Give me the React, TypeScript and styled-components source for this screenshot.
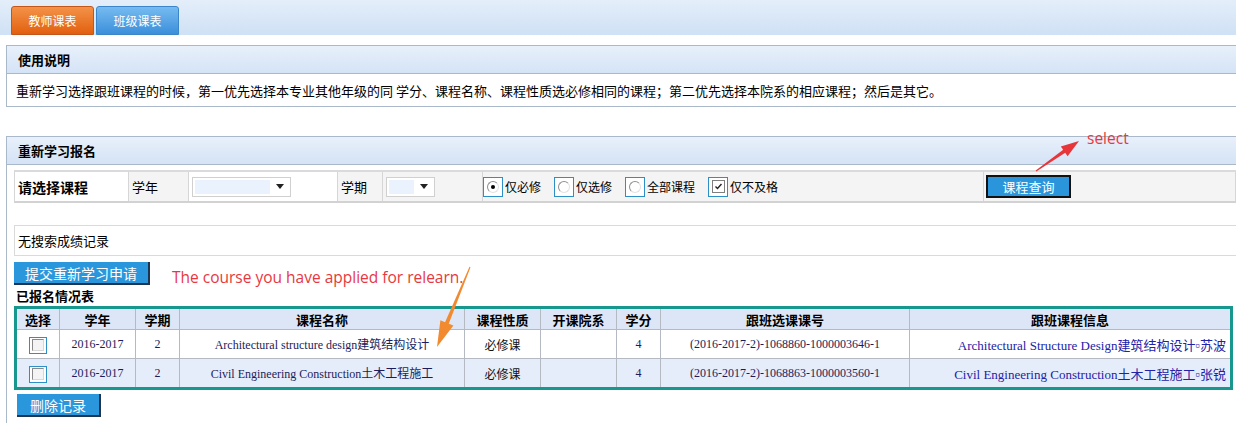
import styled, { createGlobalStyle, css } from "styled-components";

const GlobalStyle = createGlobalStyle`
	body {
		margin: 0;
		background: #ffffff;
		font-family: "Noto Sans CJK SC", "Noto Sans", sans-serif;
		font-size: 12px;
		color: #000;
		overflow: hidden;
	}
`;

const Page = styled.div`
	position: relative;
	width: 1236px;
	height: 423px;
	overflow: hidden;
`;

const TopBar = styled.div`
	height: 35px;
	display: flex;
	align-items: flex-end;
	gap: 2px;
	padding-left: 11px;
	background: linear-gradient(#e4eefa, #cfe1f5);
	box-sizing: border-box;
`;

const Tab = styled.div<{ $active?: boolean }>`
	width: 83px;
	height: 29px;
	box-sizing: border-box;
	display: flex;
	align-items: center;
	justify-content: center;
	color: #fff;
	font-size: 12px;
	border-radius: 3px 3px 0 0;
	${(p) =>
		p.$active
			? css`
					background: linear-gradient(#f39248, #e2600f);
					border: 1px solid #c4561a;
			  `
			: css`
					background: linear-gradient(#77bbf0, #3b8fda);
					border: 1px solid #3a86c8;
			  `}
`;

const Content = styled.div`
	padding: 10px 0 0 6px;
`;

const Panel = styled.div<{ $gap?: number }>`
	border: 1px solid #a9b9ca;
	border-right: none;
	margin-top: ${(p) => p.$gap || 0}px;
`;

const PanelHeader = styled.div`
	height: 27px;
	display: flex;
	align-items: center;
	padding-left: 11px;
	font-size: 13px;
	font-weight: bold;
	background: linear-gradient(#e8f0fb, #d4e3f6);
	border-bottom: 1px solid #a9b9ca;
`;

const Notice = styled.div`
	height: 32px;
	display: flex;
	align-items: center;
	padding-left: 9px;
	font-size: 13px;
`;

const PanelBody = styled.div`
	padding: 5px 0 0 7px;
	height: 260px;
`;

const FilterRow = styled.div`
	display: grid;
	grid-template-columns: 114px 60px 149px 45px 100px 501px 1fr;
	height: 33px;
	border-top: 2px solid #dadada;
	border-bottom: 2px solid #d2d2d2;
	border-left: 1px solid #d6d6d6;
	box-sizing: border-box;
`;

const FilterCell = styled.div<{ $gray?: boolean; $bold?: boolean; $flush?: boolean }>`
	display: flex;
	align-items: center;
	padding-left: ${(p) => (p.$flush ? 0 : 3)}px;
	border-right: 1px solid #d6d6d6;
	background: ${(p) => (p.$gray ? "#f4f4f4" : "#ffffff")};
	font-size: ${(p) => (p.$bold ? "14px" : "13px")};
	font-weight: ${(p) => (p.$bold ? "bold" : "normal")};
	box-sizing: border-box;
`;

const SelectBox = styled.div<{ $w: number }>`
	width: ${(p) => p.$w}px;
	height: 20px;
	border: 1px solid #d0d0d0;
	background: #fff;
	display: flex;
	align-items: center;
	padding: 0 2px;
	box-sizing: border-box;
	gap: 4px;
	span {
		flex: 1;
		height: 14px;
		background: #e9f2fd;
	}
	svg {
		width: 8px;
		height: 5px;
		margin: 0 4px 0 2px;
	}
`;

const Options = styled.div`
	display: flex;
	align-items: center;
	gap: 13px;
`;

const Option = styled.label`
	display: flex;
	align-items: center;
	gap: 2px;
	font-size: 12px;
`;

const MarkBox = styled.span`
	width: 20px;
	height: 20px;
	box-sizing: border-box;
	border: 1px solid #2d8fc6;
	display: flex;
	align-items: center;
	justify-content: center;
	background: #fff;
`;

const Radio = styled.span<{ $on?: boolean }>`
	width: 12px;
	height: 12px;
	border-radius: 50%;
	border: 1px solid #8f8f8f;
	border-right-color: #e2e2e2;
	border-bottom-color: #e2e2e2;
	box-sizing: border-box;
	display: flex;
	align-items: center;
	justify-content: center;
	&::after {
		content: "";
		width: 4px;
		height: 4px;
		border-radius: 50%;
		background: ${(p) => (p.$on ? "#000" : "transparent")};
	}
`;

const Check = styled.span`
	width: 13px;
	height: 13px;
	border: 1px solid #7f7f7f;
	box-sizing: border-box;
	display: flex;
	align-items: center;
	justify-content: center;
	background: #fff;
	svg {
		width: 9px;
		height: 9px;
	}
`;

const QueryButton = styled.button`
	width: 85px;
	height: 23px;
	margin-left: -1px;
	background: #2b95dc;
	color: #fff;
	border: 2px solid #111;
	font-family: inherit;
	font-size: 13px;
	padding: 0;
`;

const ResultRow = styled.div`
	margin-top: 22px;
	height: 29px;
	border: 1px solid #dadada;
	border-right: none;
	display: flex;
	align-items: center;
	padding-left: 3px;
	font-size: 13px;
`;

const BlueButton = styled.button<{ $w: number; $indent?: number }>`
	display: block;
	flex: none;
	width: ${(p) => p.$w}px;
	height: 23px;
	margin-left: ${(p) => p.$indent || 0}px;
	background: #2a97dd;
	color: #fff;
	border: none;
	border-right: 2px solid #1d3550;
	border-bottom: 2px solid #1d3550;
	font-family: inherit;
	font-size: 14px;
	padding: 0;
`;

const SubmitLine = styled.div`
	margin-top: 6px;
	height: 23px;
	display: flex;
	align-items: flex-start;
	gap: 22px;
`;

const Note = styled.span`
	font-family: "Open Sans", "Noto Sans", sans-serif;
	font-size: 15.5px;
	line-height: 20px;
	color: #e8383f;
	margin-top: 5px;
`;

const TableTitle = styled.div`
	margin-top: 1px;
	height: 20px;
	line-height: 20px;
	padding-left: 2px;
	font-size: 13px;
	font-weight: bold;
`;

const Table = styled.table`
	width: 1219px;
	border-collapse: collapse;
	border: 3px solid #17978e;
	table-layout: fixed;
`;

const Th = styled.th`
	height: 20px;
	padding: 0;
	background: #dce6f6;
	border: 1px solid #b4b9c2;
	font-size: 13px;
	font-weight: bold;
	text-align: center;
`;

const Tr = styled.tr<{ $alt?: boolean }>`
	background: ${(p) => (p.$alt ? "#e6edfa" : "#ffffff")};
`;

const Td = styled.td<{ $serif?: boolean; $right?: boolean; $link?: boolean }>`
	height: 28px;
	padding: 0 4px;
	border: 1px solid #b4b9c2;
	text-align: ${(p) => (p.$right ? "right" : "center")};
	font-family: ${(p) =>
		p.$serif
			? `"Liberation Serif", "Noto Sans CJK SC", serif`
			: `"Noto Sans CJK SC", sans-serif`};
	font-size: ${(p) => (p.$link ? "13px" : "12px")};
	color: ${(p) => (p.$link ? "#2222a8" : p.$serif ? "#1c1c5a" : "#111")};
	white-space: nowrap;
	overflow: hidden;
`;

const RowCheck = styled.span`
	display: inline-flex;
	width: 18px;
	height: 17px;
	box-sizing: border-box;
	border: 1px solid #2d8fc6;
	align-items: center;
	justify-content: center;
	background: #fff;
	vertical-align: middle;
	&::after {
		content: "";
		width: 12px;
		height: 12px;
		box-sizing: border-box;
		border: 1px solid #8a8a8a;
		border-right-color: #d8d8d8;
		border-bottom-color: #d8d8d8;
		background: #f4f4f4;
	}
`;

const DeleteWrap = styled.div`
	margin-top: 4px;
`;

const Annotation = styled.svg`
	position: absolute;
	left: 0;
	top: 0;
	pointer-events: none;
`;

const SelectNote = styled.span`
	position: absolute;
	left: 1087px;
	top: 127px;
	font-family: "Open Sans", "Noto Sans", sans-serif;
	font-size: 15.5px;
	color: #e8383f;
`;

const rows = [
	{
		year: "2016-2017",
		term: "2",
		name: "Architectural structure design建筑结构设计",
		kind: "必修课",
		credit: "4",
		code: "(2016-2017-2)-1068860-1000003646-1",
		info: "Architectural Structure Design建筑结构设计▫苏波",
	},
	{
		year: "2016-2017",
		term: "2",
		name: "Civil Engineering Construction土木工程施工",
		kind: "必修课",
		credit: "4",
		code: "(2016-2017-2)-1068863-1000003560-1",
		info: "Civil Engineering Construction土木工程施工▫张锐",
	},
];

const cols = [44, 76, 44, 285, 76, 76, 44, 249, 0];
const heads = ["选择", "学年", "学期", "课程名称", "课程性质", "开课院系", "学分", "跟班选课课号", "跟班课程信息"];

const Arrow = () => (
	<svg viewBox="0 0 8 5">
		<path d="M0 0h8L4 5z" fill="#222" />
	</svg>
);

export default function App() {
	return (
		<Page>
			<GlobalStyle />
			<TopBar>
				<Tab $active>教师课表</Tab>
				<Tab>班级课表</Tab>
			</TopBar>
			<Content>
				<Panel>
					<PanelHeader>使用说明</PanelHeader>
					<Notice>
						重新学习选择跟班课程的时候，第一优先选择本专业其他年级的同 学分、课程名称、课程性质选必修相同的课程；第二优先选择本院系的相应课程；然后是其它。
					</Notice>
				</Panel>
				<Panel $gap={29}>
					<PanelHeader>重新学习报名</PanelHeader>
					<PanelBody>
						<FilterRow>
							<FilterCell $bold>请选择课程</FilterCell>
							<FilterCell $gray>学年</FilterCell>
							<FilterCell>
								<SelectBox $w={99}>
									<span />
									<Arrow />
								</SelectBox>
							</FilterCell>
							<FilterCell $gray>学期</FilterCell>
							<FilterCell $gray>
								<SelectBox $w={49}>
									<span />
									<Arrow />
								</SelectBox>
							</FilterCell>
							<FilterCell $gray $flush>
								<Options>
									<Option>
										<MarkBox>
											<Radio $on />
										</MarkBox>
										仅必修
									</Option>
									<Option>
										<MarkBox>
											<Radio />
										</MarkBox>
										仅选修
									</Option>
									<Option>
										<MarkBox>
											<Radio />
										</MarkBox>
										全部课程
									</Option>
									<Option>
										<MarkBox>
											<Check>
												<svg viewBox="0 0 9 9">
													<path d="M1.5 4.5l2 2 4-4.5" stroke="#222" strokeWidth="1.4" fill="none" />
												</svg>
											</Check>
										</MarkBox>
										仅不及格
									</Option>
								</Options>
							</FilterCell>
							<FilterCell $gray>
								<QueryButton>课程查询</QueryButton>
							</FilterCell>
						</FilterRow>
						<ResultRow>无搜索成绩记录</ResultRow>
						<SubmitLine>
							<BlueButton $w={136}>提交重新学习申请</BlueButton>
							<Note>The course you have applied for relearn.</Note>
						</SubmitLine>
						<TableTitle>已报名情况表</TableTitle>
						<Table>
							<colgroup>
								{cols.map((w, i) => (
									<col key={i} style={w ? { width: w } : undefined} />
								))}
							</colgroup>
							<thead>
								<tr>
									{heads.map((h) => (
										<Th key={h}>{h}</Th>
									))}
								</tr>
							</thead>
							<tbody>
								{rows.map((r, i) => (
									<Tr key={r.code} $alt={i % 2 === 1}>
										<Td>
											<RowCheck />
										</Td>
										<Td $serif>{r.year}</Td>
										<Td $serif>{r.term}</Td>
										<Td $serif>{r.name}</Td>
										<Td>{r.kind}</Td>
										<Td />
										<Td $serif>{r.credit}</Td>
										<Td $serif>{r.code}</Td>
										<Td $serif $right $link>
											{r.info}
										</Td>
									</Tr>
								))}
							</tbody>
						</Table>
						<DeleteWrap>
							<BlueButton $w={84} $indent={3}>
								删除记录
							</BlueButton>
						</DeleteWrap>
					</PanelBody>
				</Panel>
			</Content>
			<SelectNote>select</SelectNote>
			<Annotation width="1236" height="423">
				<polygon
					points="470.5,267.2 448.75,323.7 453.4,325.6 437,347 440.4,320.3 445.05,322.2 469.5,266.8"
					fill="#f28a30"
				/>
				<polygon
					points="1036.3,171.5 1065.2,152.8 1067.6,156.2 1079,141 1060.8,146.4 1063.2,149.8 1035.7,170.5"
					fill="#e8353a"
				/>
			</Annotation>
		</Page>
	);
}
